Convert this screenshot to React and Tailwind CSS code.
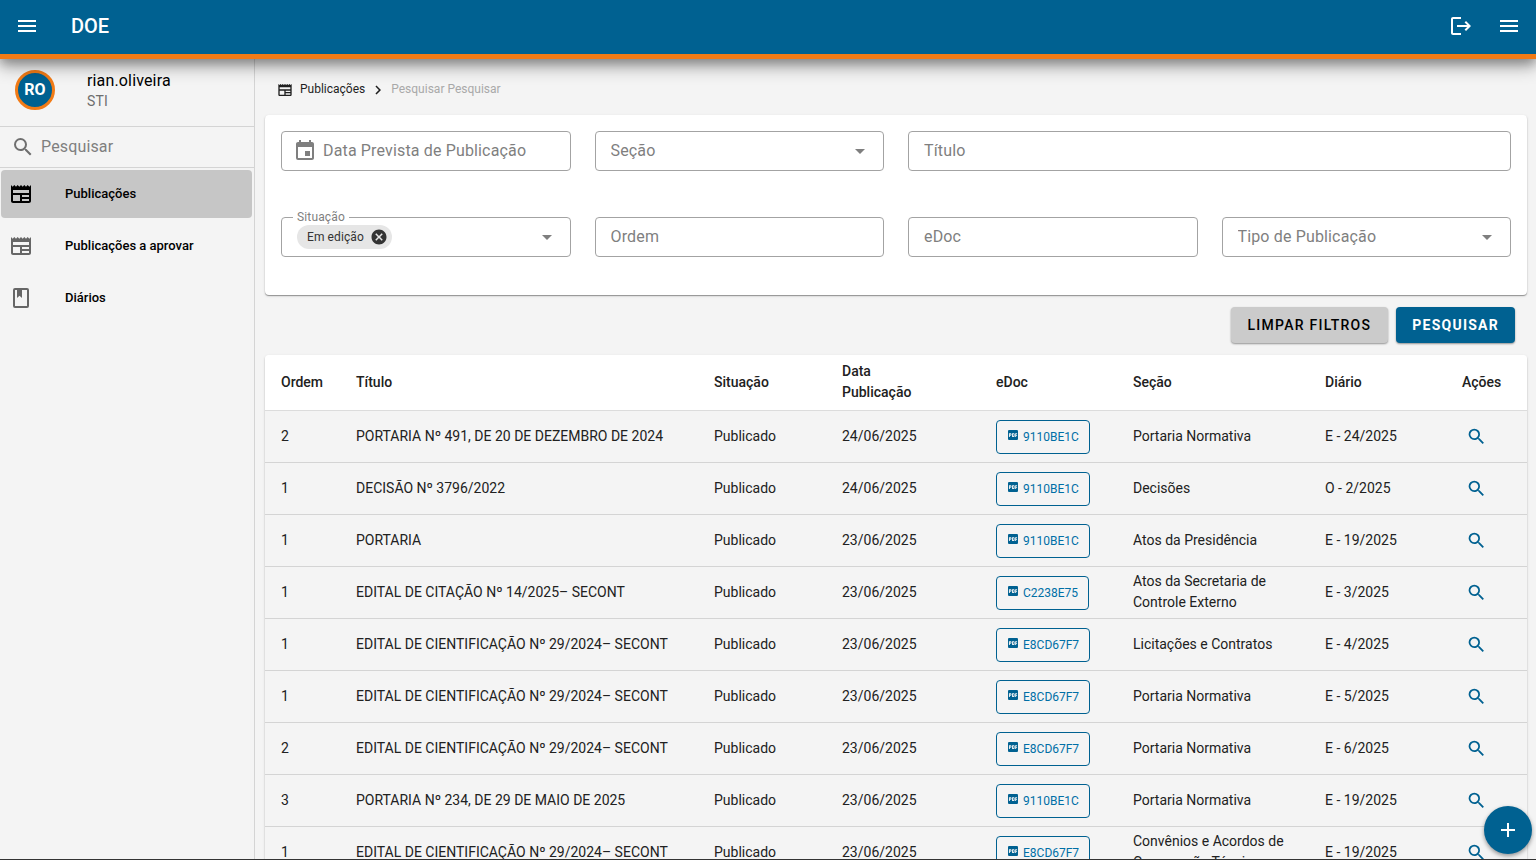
import React, { useState } from 'react'
import {
  MdAdd,
  MdArrowDropDown,
  MdCancel,
  MdChevronRight,
  MdEvent,
  MdLogout,
  MdMenu,
  MdNewspaper,
  MdPictureAsPdf,
  MdSearch,
} from 'react-icons/md'

const BookIcon = ({ size = 24 }) => (
  <svg width={size} height={size} viewBox="0 0 24 24" fill="currentColor" aria-hidden="true">
    <path d="M18 2A2 2 0 0 1 20 4V20A2 2 0 0 1 18 22H6A2 2 0 0 1 4 20V4A2 2 0 0 1 6 2H18M18 4H13V12L10.5 9.75L8 12V4H6V20H18V4Z" />
  </svg>
)

const menu = [
  { label: 'Publicações', icon: MdNewspaper, active: true },
  { label: 'Publicações a aprovar', icon: MdNewspaper },
  { label: 'Diários', icon: BookIcon },
]

const rows = [
  { ordem: 2, titulo: 'PORTARIA Nº 491, DE 20 DE DEZEMBRO DE 2024', data: '24/06/2025', edoc: '9110BE1C', secao: 'Portaria Normativa', diario: 'E - 24/2025' },
  { ordem: 1, titulo: 'DECISÃO Nº 3796/2022', data: '24/06/2025', edoc: '9110BE1C', secao: 'Decisões', diario: 'O - 2/2025' },
  { ordem: 1, titulo: 'PORTARIA', data: '23/06/2025', edoc: '9110BE1C', secao: 'Atos da Presidência', diario: 'E - 19/2025' },
  { ordem: 1, titulo: 'EDITAL DE CITAÇÃO Nº 14/2025– SECONT', data: '23/06/2025', edoc: 'C2238E75', secao: 'Atos da Secretaria de Controle Externo', diario: 'E - 3/2025' },
  { ordem: 1, titulo: 'EDITAL DE CIENTIFICAÇÃO Nº 29/2024– SECONT', data: '23/06/2025', edoc: 'E8CD67F7', secao: 'Licitações e Contratos', diario: 'E - 4/2025' },
  { ordem: 1, titulo: 'EDITAL DE CIENTIFICAÇÃO Nº 29/2024– SECONT', data: '23/06/2025', edoc: 'E8CD67F7', secao: 'Portaria Normativa', diario: 'E - 5/2025' },
  { ordem: 2, titulo: 'EDITAL DE CIENTIFICAÇÃO Nº 29/2024– SECONT', data: '23/06/2025', edoc: 'E8CD67F7', secao: 'Portaria Normativa', diario: 'E - 6/2025' },
  { ordem: 3, titulo: 'PORTARIA Nº 234, DE 29 DE MAIO DE 2025', data: '23/06/2025', edoc: '9110BE1C', secao: 'Portaria Normativa', diario: 'E - 19/2025' },
  { ordem: 1, titulo: 'EDITAL DE CIENTIFICAÇÃO Nº 29/2024– SECONT', data: '23/06/2025', edoc: 'E8CD67F7', secao: 'Convênios e Acordos de Cooperação Técnica', diario: 'E - 19/2025' },
]

const box = 'relative flex h-10 items-center rounded border border-[#a3a3a3] text-base text-[#7f7f7f]'
const cardShadow = 'shadow-[0_1px_1px_rgba(0,0,0,0.35),0_1px_3px_rgba(0,0,0,0.12)]'

const TextField = ({ label, icon, className = '' }) => (
  <div className={className}>
    <div className={box}>
      {icon && <span className="shrink-0 pl-[11px]">{icon}</span>}
      <input
        type="text"
        aria-label={label}
        placeholder={label}
        className={`h-full w-full min-w-0 bg-transparent pb-0.5 tracking-[0.15px] outline-none placeholder:text-[#7f7f7f] ${icon ? 'px-1.5' : 'px-[15px]'}`}
      />
    </div>
  </div>
)

const SelectField = ({ label }) => (
  <div className={box}>
    <select aria-label={label} className="h-full w-full appearance-none bg-transparent px-[15px] tracking-[0.15px] outline-none">
      <option>{label}</option>
    </select>
    <MdArrowDropDown size={24} className="pointer-events-none absolute right-[11px]" />
  </div>
)

const SituacaoField = () => {
  const [value, setValue] = useState('Em edição')

  return (
    <div className={box}>
      <label htmlFor="situacao" className="absolute -top-[9px] left-[11px] bg-white px-1 text-xs leading-4 tracking-[0.15px]">Situação</label>
      {value && (
        <span className="ml-[15px] flex h-6 shrink-0 items-center gap-1.5 rounded-full bg-[#e6e6e6] pl-2.5 pr-1 text-xs tracking-[0.1px] text-[#333]">
          {value}
          <button type="button" aria-label="Remover" onClick={() => setValue('')} className="text-[#333]">
            <MdCancel size={18} />
          </button>
        </span>
      )}
      <select
        id="situacao"
        value=""
        onChange={e => setValue(e.target.value)}
        className="h-full w-full min-w-0 appearance-none bg-transparent outline-none"
      >
        <option value=""></option>
        <option value="Em edição">Em edição</option>
        <option value="Publicado">Publicado</option>
      </select>
      <MdArrowDropDown size={24} className="pointer-events-none absolute right-[11px]" />
    </div>
  )
}

const Header = () => (
  <header className="relative z-20 flex shrink-0 items-center border-b-[5px] border-[#f27b16] bg-[#006191] text-white shadow-[0_8px_16px_rgba(0,0,0,0.3),0_4px_10px_rgba(0,0,0,0.25)]">
    <div className="flex h-[54px] flex-1 items-center px-[15px] pb-0.5">
      <button type="button" aria-label="Abrir menu"><MdMenu size={24} /></button>
      <h1 className="ml-8 text-xl font-medium">DOE</h1>
      <div className="ml-auto flex gap-6">
        <button type="button" aria-label="Sair"><MdLogout size={24} /></button>
        <button type="button" aria-label="Opções"><MdMenu size={24} /></button>
      </div>
    </div>
  </header>
)

const Sidebar = () => (
  <aside className="w-[255px] shrink-0 border-r border-[#d4d4d4]">
    <div className="flex h-[68px] items-center gap-8 border-b border-[#d4d4d4] pb-[5px] pl-[15px]">
      <div className="flex size-10 items-center justify-center rounded-full border-[3px] border-[#f27b16] bg-[#006191] font-bold text-white">
        RO
      </div>
      <div className="pt-0.5">
        <p className="text-base leading-5 tracking-[0.15px] text-black">rian.oliveira</p>
        <p className="text-sm leading-5 tracking-[0.15px] text-[#6e6e6e]">STI</p>
      </div>
    </div>
    <div className="flex h-[41px] items-center gap-1.5 border-b border-[#d4d4d4] pl-[11px] text-[#6f6f6f]">
      <MdSearch size={24} className="shrink-0" />
      <input type="text" aria-label="Pesquisar" placeholder="Pesquisar" className="w-full min-w-0 bg-transparent tracking-[0.15px] outline-none placeholder:text-[#7f7f7f]" />
    </div>
    <nav className="flex flex-col gap-1 py-0.5 pl-px pr-0.5">
      {menu.map(({ label, icon: Icon, active }) => (
        <a
          key={label}
          href="#"
          className={`flex h-12 items-center gap-8 rounded pl-2 text-[13px] font-medium text-black ${active ? 'bg-[#c6c6c6]' : ''}`}
        >
          <span className={active ? 'text-black' : 'text-[#666]'}><Icon size={24} /></span>
          {label}
        </a>
      ))}
    </nav>
  </aside>
)

const Filters = () => (
  <form className={`grid grid-cols-4 gap-x-6 gap-y-[46px] rounded bg-white px-4 pb-[38px] pt-4 ${cardShadow}`}>
    <TextField label="Data Prevista de Publicação" icon={<MdEvent size={24} />} />
    <SelectField label="Seção" />
    <TextField label="Título" className="col-span-2" />
    <SituacaoField />
    <TextField label="Ordem" />
    <TextField label="eDoc" />
    <SelectField label="Tipo de Publicação" />
  </form>
)

const Table = () => (
  <div className={`overflow-hidden rounded ${cardShadow}`}>
    <table className="w-full table-fixed bg-[#f4f4f4] text-left text-sm leading-[21px] text-[#212121] [&_td]:px-4 [&_th]:px-4 [&_th]:font-medium">
      <thead className="bg-white">
        <tr className="h-[55px] border-b border-[#dcdcdc]">
          <th className="w-[75px]">Ordem</th>
          <th>Título</th>
          <th className="w-32">Situação</th>
          <th className="w-[154px]">Data<br />Publicação</th>
          <th className="w-[137px]">eDoc</th>
          <th className="w-48">Seção</th>
          <th className="w-[137px]">Diário</th>
          <th className="w-[81px]">Ações</th>
        </tr>
      </thead>
      <tbody>
        {rows.map((row, i) => (
          <tr key={i} className="h-[52px] border-b border-[#d4d4d4]">
            <td>{row.ordem}</td>
            <td>{row.titulo}</td>
            <td>Publicado</td>
            <td>{row.data}</td>
            <td>
              <a href="#" className="mt-px flex h-[34px] w-max items-center gap-[5px] rounded border border-[#006191] px-[10px] text-xs text-[#006fa6]">
                {/* front sheet of the icon only */}
                <MdPictureAsPdf size={10} viewBox="6 2 16 16" className="mb-[3px] ml-px text-[#006191]" />
                {row.edoc}
              </a>
            </td>
            <td>{row.secao}</td>
            <td>{row.diario}</td>
            <td>
              <button type="button" aria-label="Visualizar" className="ml-1 flex text-[#006191]"><MdSearch size={21} /></button>
            </td>
          </tr>
        ))}
      </tbody>
    </table>
  </div>
)

const App = () => (
  <div className="flex h-screen flex-col border-b border-[#333] bg-[#f4f4f4] font-['Roboto',sans-serif]">
    <Header />
    <div className="flex min-h-0 flex-1">
      <Sidebar />
      <main className="min-w-0 flex-1 overflow-y-auto pl-2.5 pr-[9px] [scrollbar-width:none]">
        <nav aria-label="Navegação" className="flex h-14 items-center pb-0.5 pl-3 pt-1.5 text-xs text-[#1f1f1f]">
          <a href="#" className="flex items-center gap-[7px]"><MdNewspaper size={16} className="mt-0.5" />Publicações</a>
          <MdChevronRight size={18} className="mx-1 mt-0.5" />
          <span className="text-[#a9a9a9]">Pesquisar Pesquisar</span>
        </nav>
        <Filters />
        <div className="flex justify-end gap-2 px-3 py-3 text-sm tracking-[1.25px]">
          <button type="button" className="h-9 rounded bg-[#cbcbcb] px-[17px] font-medium text-black shadow-[0_1px_2px_rgba(0,0,0,0.4)]">LIMPAR FILTROS</button>
          <button type="button" className="h-9 rounded bg-[#006191] px-4 font-bold text-white shadow-[0_1px_2px_rgba(0,0,0,0.4)]">PESQUISAR</button>
        </div>
        <Table />
      </main>
    </div>
    <button
      type="button"
      aria-label="Nova publicação"
      className="fixed bottom-1.5 right-1 z-30 flex size-12 items-center justify-center rounded-full bg-[#006191] text-white shadow-[0_2px_4px_rgba(0,0,0,0.4)]"
    >
      <MdAdd size={24} />
    </button>
  </div>
)

export default App
